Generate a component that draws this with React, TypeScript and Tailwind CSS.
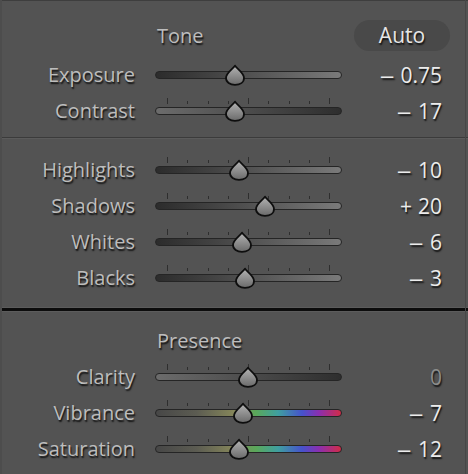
import { useId } from 'react'

type TrackKind = 'darkToLight' | 'lightToDark' | 'color'

interface SliderRow {
  label: string
  sign?: '–' | '+'
  value: string
  pos: number // thumb centre, px from track left
  ticks: boolean
  track: TrackKind
  dim?: boolean
}

const TRACK_BG: Record<TrackKind, string> = {
  darkToLight: 'bg-linear-to-r from-[#2c2c2c] to-[#7a7a7a]',
  lightToDark: 'bg-linear-to-r from-[#6c6c6c] to-[#2e2e2e]',
  color:
    'bg-[linear-gradient(to_right,#474747_0%,#5c5c52_22%,#85865a_42%,#5aa85a_54%,#3f9fa0_66%,#4652cc_79%,#8a2fb0_88%,#d22c48_100%)]',
}

const TONE: SliderRow[] = [
  { label: 'Exposure', sign: '–', value: '0.75', pos: 80, ticks: false, track: 'darkToLight' },
  { label: 'Contrast', sign: '–', value: '17', pos: 80, ticks: true, track: 'lightToDark' },
]

const LEVELS: SliderRow[] = [
  { label: 'Highlights', sign: '–', value: '10', pos: 84, ticks: true, track: 'darkToLight' },
  { label: 'Shadows', sign: '+', value: '20', pos: 110, ticks: true, track: 'darkToLight' },
  { label: 'Whites', sign: '–', value: '6', pos: 87, ticks: true, track: 'darkToLight' },
  { label: 'Blacks', sign: '–', value: '3', pos: 90, ticks: true, track: 'darkToLight' },
]

const PRESENCE: SliderRow[] = [
  { label: 'Clarity', value: '0', pos: 93, ticks: true, track: 'lightToDark', dim: true },
  { label: 'Vibrance', sign: '–', value: '7', pos: 88, ticks: true, track: 'color' },
  { label: 'Saturation', sign: '–', value: '12', pos: 84, ticks: true, track: 'color' },
]

const TICKS = [0, 1, 2, 3, 4, 5, 6, 7, 8]

function Thumb({ left }: { left: number }) {
  const id = useId()
  return (
    <svg
      width="22"
      height="22"
      viewBox="0 0 22 22"
      className="absolute top-[7px]"
      style={{ left: left - 11 }}
    >
      <defs>
        <linearGradient id={id} x1="0" y1="0" x2="0" y2="1">
          <stop offset="0" stopColor="#b4b4b4" />
          <stop offset="1" stopColor="#6a6a6a" />
        </linearGradient>
      </defs>
      <path
        d="M11 1.6 C12.6 4.6 20 8.6 20 14 C20 18.4 16 20.8 11 20.8 C6 20.8 2 18.4 2 14 C2 8.6 9.4 4.6 11 1.6 Z"
        fill={`url(#${id})`}
        stroke="#0e0e0e"
        strokeWidth="1.8"
        strokeLinejoin="round"
      />
    </svg>
  )
}

function Slider({ row }: { row: SliderRow }) {
  return (
    <div className="relative h-[36px] w-[187px]">
      {row.ticks &&
        TICKS.map((i) => (
          <div
            key={i}
            className={`absolute w-px bg-[#2e2e2e] ${
              i === 0 || i === 4 || i === 8 ? 'top-[5px] h-[6px]' : 'top-[8px] h-[3px]'
            }`}
            style={{ left: Math.round(12 + i * 20.25) }}
          />
        ))}
      <div
        className={`absolute left-0 top-[14px] h-[8px] w-full rounded-full border-[1.5px] border-[#252525] ${TRACK_BG[row.track]}`}
      />
      <Thumb left={row.pos} />
    </div>
  )
}

function Row({ row }: { row: SliderRow }) {
  return (
    <div className="grid h-[36px] grid-cols-[135px_187px_80px] items-center gap-x-[20px]">
      <span className="text-right text-[#bdbdbd]">{row.label}</span>
      <Slider row={row} />
      <span
        className={`whitespace-nowrap text-right text-[21px] ${row.dim ? 'text-[#8c8c8c]' : 'text-[#ececec]'}`}
      >
        {row.sign === '–' && (
          <span className="mr-[6px] inline-block origin-right scale-x-140">–</span>
        )}
        {row.sign === '+' && <span className="mr-[6px]">+</span>}
        {row.value}
      </span>
    </div>
  )
}

export default function App() {
  return (
    <div
      className="relative h-[474px] w-[468px] overflow-hidden bg-[#535353] text-[20px] leading-none [text-shadow:1px_1.5px_1.5px_rgba(0,0,0,0.8)]"
      style={{ fontFamily: '"Open Sans", "Noto Sans", sans-serif' }}
    >
      <div className="flex h-full flex-col border-t border-t-[#3e3e3e]">
        {/* Tone */}
        <div className="flex h-[136px] flex-col pt-[19px]">
          <div className="flex h-[31px] items-center">
            <span className="ml-[157px] text-[#bdbdbd]">Tone</span>
            <span className="ml-auto mr-[18px] flex h-[31px] w-[96px] items-center justify-center rounded-full bg-[#494949] text-[21px] text-[#e6e6e6]">
              Auto
            </span>
          </div>
          <div className="mt-[6px] flex flex-col">
            {TONE.map((r) => (
              <Row key={r.label} row={r} />
            ))}
          </div>
        </div>
        <div className="h-px bg-[#3b3b3b]" />
        <div className="h-px bg-[#5b5b5b]" />

        {/* Levels */}
        <div className="flex h-[168px] flex-col pt-[13px]">
          {LEVELS.map((r) => (
            <Row key={r.label} row={r} />
          ))}
        </div>
        <div className="h-px bg-[#5c5c5c]" />
        <div className="h-[3px] bg-[#0c0c0c]" />
        <div className="h-px bg-[#5c5c5c]" />

        {/* Presence */}
        <div className="flex flex-col pt-[11px]">
          <div className="flex h-[36px] items-center">
            <span className="ml-[157px] text-[#bdbdbd]">Presence</span>
          </div>
          {PRESENCE.map((r) => (
            <Row key={r.label} row={r} />
          ))}
        </div>
      </div>
      {/* panel edges */}
      <div className="pointer-events-none absolute inset-y-0 left-0 w-[2px] bg-[#4d4d4d]" />
      <div className="pointer-events-none absolute inset-y-0 right-[2px] w-px bg-[#474747]" />
    </div>
  )
}
